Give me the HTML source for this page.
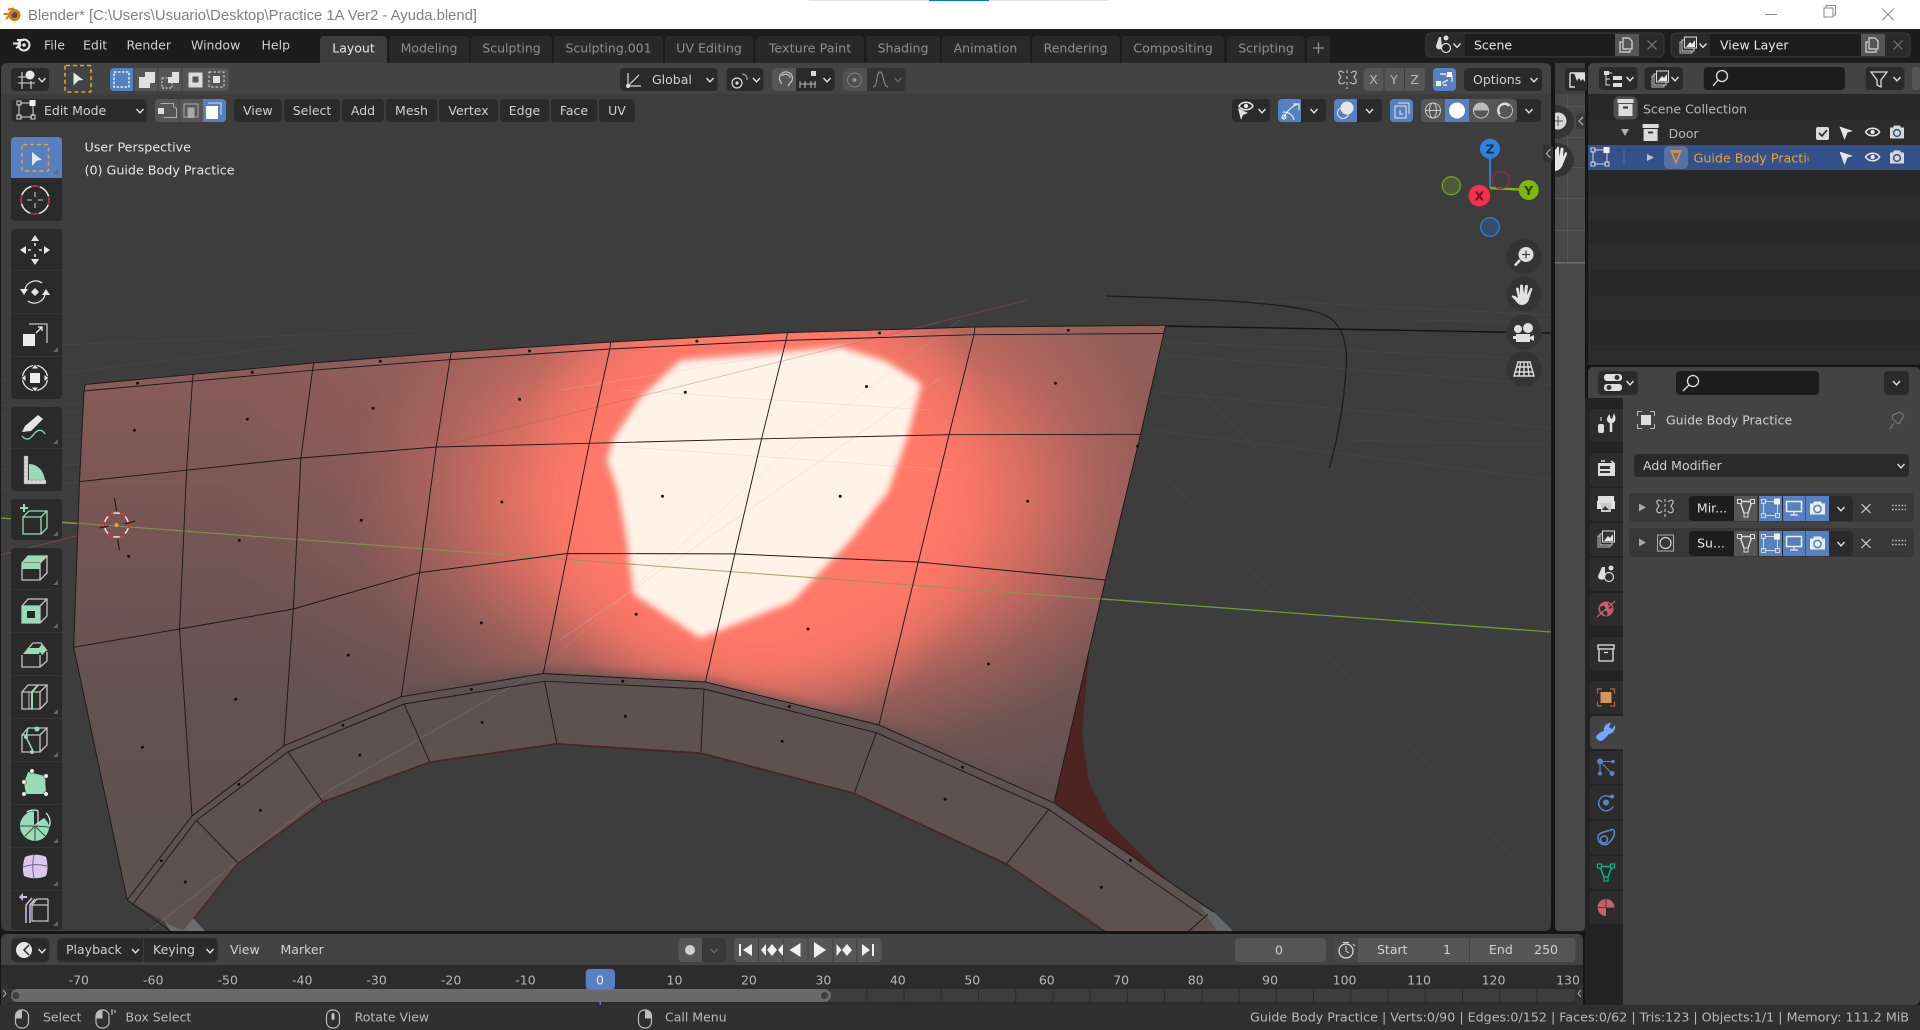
<!DOCTYPE html>
<html lang="en"><head><meta charset="utf-8"><title>Blender</title>
<style>
html,body{margin:0;padding:0;background:#161616;overflow:hidden}
svg{display:block;position:absolute;left:0;top:0}
text{font-family:"DejaVu Sans","Liberation Sans",sans-serif;font-size:12.5px;fill:#d0d0d0;white-space:pre}
.d{fill:#8f8f8f}.b{fill:#e6e6e6}.g{fill:#b8b8b8}
.m{text-anchor:middle}
.w{fill:#2a2a2a}.k{fill:#1d1d1d}.l{fill:#565656}.u{fill:#5680c2}
.s{fill:none;stroke:#dcdcdc;stroke-width:1.3}
.sg{fill:none;stroke:#c4c4c4;stroke-width:1.3}
.gr{fill:#97dcb6}
</style></head><body>
<svg width="1920" height="1030" viewBox="0 0 1920 1030" xmlns="http://www.w3.org/2000/svg">
<defs>
<path id="ch" d="M-3.5-2 0 1.8 3.5-2" fill="none" stroke="#e0e0e0" stroke-width="1.4"/>
<path id="chd" d="M-3.5-2 0 1.8 3.5-2" fill="none" stroke="#6a6a6a" stroke-width="1.3"/>
<path id="tr" d="M-3-4 4 0-3 4z" fill="#a8a8a8"/>
<path id="ar" d="M-5-6.500 5 1 0 1.500-5 6.500z" fill="#e6e6e6"/>
<path id="ar2" d="M-6.500-6.500 7-2 1.500-.5-1.500 7z" fill="#e6e6e6"/>
<g id="eye"><path d="M-7 0C-4-5 4-5 7 0 4 5-4 5-7 0z" fill="none" stroke="#e6e6e6" stroke-width="1.6"/><circle r="2.2" fill="#e6e6e6"/></g>
<g id="cam"><path d="M-7-5h3l1-2h6l1 2h3v11h-14z" fill="#d8d8d8"/><circle cy="0.5" r="3.4" fill="none" stroke="#34518a" stroke-width="1.5"/></g>
<g id="cam2"><path d="M-7.5-5h3l1-2h7l1 2h3v11h-15z" fill="#ececec"/><circle cy="0.5" r="3.6" fill="none" stroke="#5680c2" stroke-width="1.5"/></g>
<g id="box"><rect x="-8" y="-9" width="16" height="4" fill="#dcdcdc"/><path d="M-7-4h14V8H-7z" fill="#dcdcdc"/><rect x="-2.5" y="-1.5" width="5" height="2" fill="#333"/></g>
<g id="mode"><path d="M-6-7H5M-7-6V6M-6 7H6M7-5V6" stroke="#d8d8d8" stroke-width="1" fill="none"/><rect x="-9" y="-9" width="4" height="4" fill="none" stroke="#d8d8d8"/><rect x="-9" y="5" width="4" height="4" fill="none" stroke="#d8d8d8"/><rect x="5" y="5" width="4" height="4" fill="none" stroke="#d8d8d8"/><rect x="3.5" y="-10" width="6" height="6" fill="#f0f0f0"/></g>
<g id="mt"><path d="M-6-7H6L1.5 6h-3z" fill="none" stroke="#dcdcdc" stroke-width="1.4"/><rect x="-8.5" y="-9" width="4" height="4" fill="#555" stroke="#dcdcdc"/><rect x="4.5" y="-9" width="4" height="4" fill="#555" stroke="#dcdcdc"/><rect x="-2" y="4.5" width="4" height="4" fill="#555" stroke="#dcdcdc"/></g>
<g id="mon"><rect x="-7.5" y="-6.5" width="15" height="10" fill="none" stroke="#f0f0f0" stroke-width="1.5"/><path d="M0 4v2.5M-4 7h8" stroke="#f0f0f0" stroke-width="1.2"/></g>
<g id="xx"><path d="M-4.5-4.5 4.5 4.5M4.5-4.5-4.5 4.5" stroke="#d0d0d0" stroke-width="1.2"/></g>
<path id="dots" d="M-7-2h14M-7 2h14" stroke="#bbb" stroke-width="1.6" stroke-dasharray="1.6 1.6" fill="none"/>
<g id="wc"><path d="M-13-5h18v17h-18zM-13-5l6-7h19l-7 7M12-12V5l-7 7" fill="none" stroke="#c4c4c4" stroke-width="1.3"/></g>
<g id="copy"><path d="M-5-3h-2v10H3V5M-4-7H2l3 3v8H-4z" fill="none" stroke="#dcdcdc" stroke-width="1.2"/></g>
<g id="imgs"><rect x="-8" y="-3" width="12" height="11" fill="none" stroke="#bbb"/><rect x="-6" y="-5" width="12" height="11" fill="#333" stroke="#ccc"/><rect x="-3.5" y="-8" width="12" height="11" fill="#333" stroke="#e0e0e0"/><path d="M-2 2 2-3 4-1 7-5V2z" fill="#e6e6e6"/></g>
<clipPath id="vp"><rect x="1" y="94" width="1550" height="837"/></clipPath>
<clipPath id="st"><rect x="1555" y="94" width="30" height="170"/></clipPath>
<clipPath id="otx"><rect x="1690" y="146" width="118.500" height="23"/></clipPath>
<clipPath id="patch"><path d="M85 384.5 193.3 374.3 313.8 362.9 451.3 352.2 610.7 342 787.5 332.7 975 327 1165.6 325.3 1163.8 333.5 1140.6 434.3 1105.4 580 1054 803 879 725 705.4 682 543.3 673.5 401.3 696.7 284 745.7 192 816 127.2 900 73.7 647.3 79.5 481.6z"/></clipPath>
<linearGradient id="base" x1="0" y1="0" x2="0" y2="1"><stop offset="0" stop-color="#8f5e59"/><stop offset=".35" stop-color="#7a5755"/><stop offset=".7" stop-color="#675252"/><stop offset="1" stop-color="#5f5150"/></linearGradient>
<radialGradient id="glow" gradientUnits="userSpaceOnUse" cx="0" cy="0" r="1" gradientTransform="translate(765 500) scale(540 340)">
<stop offset="0" stop-color="#ff7868"/><stop offset=".34" stop-color="#ff7868"/><stop offset=".48" stop-color="#ff7868" stop-opacity=".72"/><stop offset=".62" stop-color="#ff7868" stop-opacity=".34"/><stop offset=".78" stop-color="#ff7868" stop-opacity=".08"/><stop offset="1" stop-color="#ff7868" stop-opacity="0"/>
</radialGradient>
<radialGradient id="glow2" gradientUnits="userSpaceOnUse" cx="0" cy="0" r="1" gradientTransform="translate(760 480) scale(240 260)">
<stop offset="0" stop-color="#ff7868"/><stop offset=".6" stop-color="#ff7868"/><stop offset=".8" stop-color="#ff7868" stop-opacity=".5"/><stop offset="1" stop-color="#ff7868" stop-opacity="0"/>
</radialGradient>
<filter id="b4" x="-10%" y="-10%" width="120%" height="120%"><feGaussianBlur stdDeviation="3.5"/></filter>
<filter id="b6" x="-10%" y="-30%" width="120%" height="160%"><feGaussianBlur stdDeviation="6"/></filter>
</defs>

<!-- page + titlebar -->
<rect width="1920" height="1030" fill="#161616"/>
<rect width="1920" height="29" fill="#fff"/>
<rect x="809" y="0" width="300" height="1" fill="#e4e4e4"/><rect x="929" y="0" width="60" height="1" fill="#0078d7"/>
<g transform="translate(12,15)"><circle cx="2.500" cy="0" r="6" fill="#ea7600"/><circle cx="2.500" cy="0" r="3" fill="#265787"/><path d="M-8.500-1H-1L-6 4M-4-5.500 2-6.500" stroke="#ea7600" stroke-width="2" fill="none"/></g>
<text x="28" y="20" style="font-family:'Liberation Sans',sans-serif;font-size:14.4px;fill:#808080" textLength="449" lengthAdjust="spacingAndGlyphs">Blender* [C:\Users\Usuario\Desktop\Practice 1A Ver2 - Ayuda.blend]</text>
<path d="M1765 14.5h12M1824 17h9v-9h-9zM1826 8V5.5h9.5V15h-2.5M1882 8.5l12 12M1894 8.5l-12 12" stroke="#8a8a8a" fill="none"/>

<!-- top bar -->
<rect y="29" width="1920" height="34" fill="#1c1c1c"/>
<g transform="translate(22,45)"><circle cx="2" r="5.5" fill="none" stroke="#e6e6e6" stroke-width="2"/><circle cx="2" r="1.8" fill="#e6e6e6"/><path d="M-9-1.5H-1M-6 3-1 0M-5-5H2" stroke="#e6e6e6" stroke-width="2" fill="none"/></g>
<text x="44" y="49.5">File</text><text x="83" y="49.5">Edit</text><text x="126.5" y="49.5">Render</text><text x="191" y="49.5">Window</text><text x="261.5" y="49.5">Help</text>
<g fill="#292929">
<rect x="320" y="36" width="67" height="40" rx="4" fill="#3d3d3d"/>
<rect x="389" y="36" width="80" height="40" rx="4"/><rect x="471" y="36" width="81" height="40" rx="4"/><rect x="554" y="36" width="109" height="40" rx="4"/><rect x="665" y="36" width="88" height="40" rx="4"/><rect x="756" y="36" width="108" height="40" rx="4"/><rect x="866.5" y="36" width="73.5" height="40" rx="4"/><rect x="942" y="36" width="88" height="40" rx="4"/><rect x="1032" y="36" width="88" height="40" rx="4"/><rect x="1122" y="36" width="102" height="40" rx="4"/><rect x="1227" y="36" width="77.5" height="40" rx="4"/><rect x="1307" y="36" width="23" height="40" rx="4"/>
</g>
<text class="m b" x="353.5" y="52.500">Layout</text>
<text class="m d" x="429" y="52.500">Modeling</text><text class="m d" x="511.5" y="52.500">Sculpting</text><text class="m d" x="608.5" y="52.500">Sculpting.001</text><text class="m d" x="709" y="52.500" style="font-size:12.600px">UV Editing</text><text class="m d" x="810" y="52.500" style="font-size:12.800px">Texture Paint</text><text class="m d" x="903" y="52.500">Shading</text><text class="m d" x="985.500" y="52.500">Animation</text><text class="m d" x="1075.500" y="52.500">Rendering</text><text class="m d" x="1173" y="52.500" style="font-size:12.700px">Compositing</text><text class="m d" x="1266" y="52.500">Scripting</text>
<path d="M1318.500 42.500v11M1313 48h11" stroke="#8f8f8f" stroke-width="1.3"/>
<!-- scene/viewlayer -->
<rect x="1426" y="33" width="238" height="24" rx="5" fill="#2a2a2a" stroke="#3a3a3a"/>
<rect x="1465" y="34" width="170" height="22" fill="#1d1d1d"/><rect x="1615" y="34" width="24" height="22" fill="#555"/>
<g transform="translate(1444,45)"><path d="M-5-8-8 1c0 4 5 4 6 2L-3-8z" fill="#dcdcdc"/><circle cx="2" cy="-7" r="2.5" fill="#dcdcdc"/><circle cx="2" cy="3" r="4.5" fill="#222" stroke="#dcdcdc" stroke-width="1.2"/></g>
<use href="#ch" x="1457" y="45.5"/>
<text x="1474" y="49.5" class="b">Scene</text>
<use href="#copy" x="1627" y="45"/><use href="#xx" x="1652" y="45" opacity=".45"/>
<rect x="1671" y="33" width="239" height="24" rx="5" fill="#2a2a2a" stroke="#3a3a3a"/>
<rect x="1710" y="34" width="171" height="22" fill="#1d1d1d"/><rect x="1861" y="34" width="24" height="22" fill="#555"/>
<use href="#imgs" x="1688" y="45"/><use href="#ch" x="1703" y="45.5"/>
<text x="1720" y="49.5" class="b">View Layer</text>
<use href="#copy" x="1873" y="45"/><use href="#xx" x="1898" y="45" opacity=".45"/>

<!-- viewport -->
<rect x="1" y="63" width="1550" height="868" rx="6" fill="#3d3d3d"/>
<g clip-path="url(#vp)">
<path d="M1 405 700 392M1 415 560 392M1 440 300 425M1 470 160 458M1 490 100 480M60 345 420 330M1 380 300 345M1168 342 1551 360M1165 355 1551 385M1155 392 1551 428M1150 430 1551 480M1150 345 1551 730M1160 470 1551 900M1345 440 1551 445M1250 300 1551 315M1405 320 1551 322" stroke="#444" fill="none"/>
<path d="M0 555 1028 300" stroke="#6b4046" stroke-width="1.2" opacity=".8"/>
<path d="M0 518 1551 632" stroke="#6f9a2c" stroke-width="1.300"/>
<path d="M1163 326 1551 333" stroke="#141414" stroke-width="1.4"/>
<path d="M1106 296C1200 299 1290 302 1322 314 1345 322 1348 350 1346 370 1344 400 1338 440 1329 468" fill="none" stroke="#1c1c1c" stroke-width="1.3"/>
<path d="M1089.7 647 1082 732.7 1088.8 781.6 1108.9 822.4 1158 871.4 1205 912 1054 803z" fill="#4e2422"/>
<path d="M183 932 237.5 863.400 322.3 802.200 429.5 762.200 556.7 743.900 700.9 753.200 854.5 793.600 1007 864.300 1105.8 932" fill="none" stroke="#4a2725" stroke-width="1.800"/>
<path d="M170 931 205 931 190 915 140 880z" fill="#6a6e6e"/>
<path d="M85 384.5 193.3 374.3 313.8 362.9 451.3 352.2 610.7 342 787.5 332.7 975 327 1165.6 325.3 1163.8 333.5 1140.6 434.3 1105.4 580 1054 803 1213.8 912 1233 931 1105.8 931 1007 863.3 854.5 792.6 700.9 752.2 556.7 742.9 429.5 761.2 322.3 801.2 237.5 862.4 183 931 170 925 127.2 900 73.7 647.3 79.5 481.6z" fill="#5e5251"/>
<path d="M1200 905 1213.8 912 1233 931 1217 931z" fill="#636868"/>
<path d="M78 600 74 647.300 92 720 82 640z" fill="#686c6c"/>
<g clip-path="url(#patch)">
<rect x="60" y="320" width="1120" height="490" fill="url(#base)"/>
<rect x="60" y="320" width="1120" height="490" fill="url(#glow)"/>
<rect x="60" y="200" width="1120" height="610" fill="url(#glow2)"/>
<path d="M401.3 696.7 543.3 676 705.4 686 879 730 1054 808" fill="none" stroke="#5f5150" stroke-width="12" filter="url(#b6)" opacity=".9"/>
</g>
<path d="M680 360.4 841 347 885.7 361 921.4 383.7 908 434.7 888 492 850 540.8 792 602 700.4 638 633.5 594 626.8 540.8 617.9 491.8 606.7 459 613.4 438.8 640 398z" fill="#fff3e8" filter="url(#b4)"/>
<path d="M560 390 900 335M560 640 940 378M600 445 950 470M620 390 930 410" stroke="#d9c2ba" stroke-width=".8" opacity=".35" fill="none"/>
<path d="M62 522 1100 599" stroke="#8a9a50" stroke-width="1.100" opacity=".8"/>
<path d="M0 555 940 322" stroke="#a05058" stroke-width="1" opacity=".3"/>
<path d="M150 930 330 790 540 670 800 440 960 320" stroke="#c0c0c0" stroke-width=".8" opacity=".2" fill="none"/>
<g fill="none" stroke="#1f1819" stroke-width=".95">
<path d="M85 384.5 193.3 374.3 313.8 362.9 451.3 352.2 610.7 342 787.5 332.7 975 327 1165.6 325.3"/>
<path d="M84 391 192.4 381.2 312.5 370.2 450 359.6 609.8 349 786 340.4 974 334.7 1163.8 333.5"/>
<path d="M79.5 481.6 186.6 470.2 300.9 458 436.2 447 589.3 443.3 761.6 438.8 949 434.7 1140.6 434.3"/>
<path d="M73.7 647.3 179.5 629 293.3 609 419.6 572.7 567.4 553.5 734.8 553.9 918.3 562 1105.4 580"/>
<path d="M127.2 900 192 816 284 745.7 401.3 696.7 543.3 673.5 705.4 682 879 725 1054 802.9 1213.8 912.2"/>
<path d="M133 904 196.4 820.4 288 751.8 404 704 544.6 681.2 704 689 876.3 732.7 1048.7 809.4 1202.7 916"/>
<path d="M85 384.5 84 391 79.5 481.6 73.7 647.3 127.2 900 183 940"/>
<path d="M193.3 374.3 192.4 381.2 186.6 470.2 179.5 629 192 816"/>
<path d="M313.8 362.9 312.5 370.2 300.9 458 293.3 609 284 745.7"/>
<path d="M451.3 352.2 450 359.6 436.2 447 419.6 572.7 401.3 696.7"/>
<path d="M610.7 342 609.8 349 589.3 443.3 567.4 553.5 543.3 673.5"/>
<path d="M787.5 332.7 786 340.4 761.6 438.8 734.8 553.9 705.4 682"/>
<path d="M975 327 974 334.7 949 434.7 918.3 562 879 725"/>
<path d="M1165.6 325.3 1163.8 333.5 1140.6 434.3 1105.4 580 1054 803"/>
<path d="M196.4 820.4 237.5 862.4M288 751.8 322.3 801.2M404 704 429.5 761.2M544.6 681.2 556.7 742.9M704 689 700.9 752.2M876.3 732.7 854.5 792.6M1048.7 809.4 1007 863.3M1208 914 1189 931"/>
</g>
<path d="M137.5 383.3h0M252.2 372.2h0M380.4 361.2h0M529.5 351h0M696.9 341.2h0M134.4 430.2h0M247.3 419.2h0M373.2 408.2h0M519.6 399.2h0M685.3 392.2h0M128.6 556.3h0M239.3 540.4h0M361.2 520.4h0M501.8 502h0M662.5 496.3h0M142.4 747.3h0M235.7 699.2h0M348.2 655.1h0M481.3 622.9h0M636.2 614.3h0M161.2 860.8h0M238.8 784.5h0M342.9 725.3h0M471.4 689.4h0M622.8 681.2h0M185.3 882h0M260.3 810.2h0M359.8 755.1h0M482.1 722.4h0M625.4 716.3h0M879.5 333h0M1068.3 330.2h0M866.5 386.5h0M1055.4 383.3h0M840.2 496.3h0M1027.7 501.2h0M1137.5 446.1h0M808 629h0M988.4 664h0M789.3 706.5h0M962.5 767.3h0M1130.4 860.4h0M782.1 741.2h0M945.1 799.2h0M1101.3 887.3h0" stroke="#111" stroke-width="3" stroke-linecap="round" fill="none"/>
<!-- 3D cursor -->
<g transform="translate(116.500,525)"><circle r="12" fill="none" stroke="#e8e8e8" stroke-width="1.4"/><circle r="12" fill="none" stroke="#e02020" stroke-width="1.5" stroke-dasharray="6 6.5" stroke-dashoffset="3"/><path d="M-2-27 0-14M1 14 3 25M-17 3-8 1M8-1 19-4" stroke="#1b1516"/><circle r="2" fill="#f0a030"/></g>
</g>
<!-- viewport header -->
<path d="M1 94V69a6 6 0 0 1 6-6h1538a6 6 0 0 1 6 6v25z" fill="#434343"/>
<rect x="11" y="68" width="38" height="23" rx="4" class="w"/>
<g transform="translate(28,80)"><path d="M-10 3H7M-10-3H2M-6-8V9M3 1V9" stroke="#dcdcdc" stroke-width="1.1" fill="none"/><circle cx="2" cy="-5" r="4.5" fill="#e6e6e6"/></g><use href="#ch" x="42" y="80"/>
<rect x="65" y="65.500" width="26" height="26.500" rx="1" fill="none" stroke="#e8a32e" stroke-width="1.600" stroke-dasharray="4 3"/>
<use href="#ar" x="78.500" y="79"/>
<rect x="110" y="68" width="119" height="23" rx="4" class="l"/><path d="M114 68h19v23h-19a4 4 0 0 1-4-4V72a4 4 0 0 1 4-4z" class="u"/>
<path d="M134 68v23M158 68v23M182 68v23" stroke="#3d3d3d"/>
<rect x="114" y="72" width="15" height="15" fill="none" stroke="#fff" stroke-width="1.3" stroke-dasharray="2.500 1.500"/>
<path d="M145 72h10v11h-5v5h-11v-11h6z" fill="#e0e0e0"/>
<path d="M172 72h7v11h-11v-6h4z" fill="#e0e0e0"/><rect x="162" y="78" width="10" height="10" fill="none" stroke="#ddd" stroke-dasharray="2 1.500"/>
<path d="M189 72h14v15h-14zM193 76v6h6v-6z" fill="#dcdcdc" fill-rule="evenodd" transform="translate(-.5,.5)"/>
<rect x="209" y="72" width="15" height="15" fill="none" stroke="#ddd" stroke-dasharray="2.500 2"/><rect x="213" y="76" width="7" height="7" fill="#e0e0e0"/>
<!-- orientation -->
<rect x="620" y="68" width="97.500" height="23" rx="4" class="w"/>
<path d="M628 73V86H641M629 85 639 75" stroke="#dcdcdc" stroke-width="1.2" fill="none"/><circle cx="628" cy="86" r="2" fill="#dcdcdc"/>
<text x="652" y="84">Global</text><use href="#ch" x="710" y="80"/>
<rect x="726.500" y="68" width="37" height="23" rx="4" class="w"/>
<circle cx="737" cy="83" r="5" fill="none" stroke="#dcdcdc" stroke-width="1.2"/><circle cx="737" cy="83" r="1.6" fill="#dcdcdc"/><path d="M742 74a5 5 0 0 1 5 6" fill="none" stroke="#bbb"/><use href="#ch" x="756.500" y="80"/>
<rect x="772" y="68" width="62.500" height="23" rx="4" class="w"/><path d="M776 68h20v23h-20a4 4 0 0 1-4-4V72a4 4 0 0 1 4-4z" class="l"/>
<path d="M782 84c-6-7 0-13 5-12 6 1 7 8 3 11l-2 3M782 76c2-3 8-2 8 2" fill="none" stroke="#bfbfbf" stroke-width="1.3"/>
<path d="M800 84h16M800 81v7M805 81v7M811 81v7M815 81v7" stroke="#bbb" fill="none"/><rect x="811" y="71" width="5" height="5" fill="#d8d8d8"/><use href="#ch" x="827" y="80"/>
<rect x="843" y="68" width="62.500" height="23" rx="4" fill="#333"/><path d="M847 68h20v23h-20a4 4 0 0 1-4-4V72a4 4 0 0 1 4-4z" fill="#505050"/>
<circle cx="854.500" cy="80" r="7" fill="none" stroke="#808080"/><circle cx="854.500" cy="80" r="2" fill="#909090"/><path d="M873 87c5 0 3-15 7-15s3 15 8 15" fill="none" stroke="#808080" stroke-width="1.2"/><use href="#chd" x="898" y="80"/>
<g transform="translate(1349,79)"><path d="M-2-9v3M-2-3v3M-2 3v3M-2 8v2M-5-6c-3-3-6-2-5 1l2 3-2 3c-1 4 3 5 6 2M2-6c3-3 6-2 5 1L5-2l2 3c1 4-3 5-6 2" fill="none" stroke="#bbb" stroke-width="1.2"/></g>
<rect x="1363.700" y="68" width="61.300" height="23" rx="4" class="l"/><path d="M1384 68v23M1404.500 68v23" stroke="#3d3d3d"/>
<text x="1373.500" y="84" class="m g">X</text><text x="1394" y="84" class="m g">Y</text><text x="1414.500" y="84" class="m g">Z</text>
<rect x="1433" y="68" width="23" height="23" rx="4" class="u"/><path d="M1438 86l3-3M1446 76h6v6M1440 74h6M1447 85h-4M1448 80l-6 3" stroke="#e6e6e6" stroke-width="1.4" fill="none"/><rect x="1436" y="81" width="5" height="5" fill="#fff"/><rect x="1447" y="72" width="5" height="5" fill="#fff"/>
<rect x="1464" y="68" width="78" height="23" rx="4" class="w"/><text x="1473" y="84">Options</text><use href="#ch" x="1534" y="80"/>
<!-- row 2 -->
<rect x="11.400" y="99" width="135.600" height="23" rx="4" class="w" stroke="#383838"/>
<use href="#mode" x="26" y="110"/><text x="44" y="115">Edit Mode</text><use href="#ch" x="140" y="111"/>
<rect x="155" y="99" width="71" height="23" rx="4" class="l"/><path d="M203 99h19a4 4 0 0 1 4 4v15a4 4 0 0 1-4 4h-19z" class="u"/><path d="M179 99v23" stroke="#3d3d3d"/>
<path d="M160 104h13v3l3 2v9h-13" fill="none" stroke="#aaa" transform="translate(.5,-.5)"/><rect x="158" y="108" width="6" height="6" fill="#ddd"/>
<path d="M184 104h14v13h-4V108h-6v9h-4z" fill="none" stroke="#aaa"/><rect x="188" y="108" width="6" height="10" fill="#aaa"/>
<path d="M208 103h13v12" fill="none" stroke="#ddd"/><rect x="206" y="106" width="12" height="13" fill="#fff"/>
<g class="w">
<rect x="234" y="99" width="47.600" height="23" rx="4"/><rect x="284" y="99" width="56" height="23" rx="4"/><rect x="342" y="99" width="42" height="23" rx="4"/><rect x="386" y="99" width="51" height="23" rx="4"/><rect x="439" y="99" width="59" height="23" rx="4"/><rect x="500" y="99" width="49" height="23" rx="4"/><rect x="551" y="99" width="46" height="23" rx="4"/><rect x="599" y="99" width="35.700" height="23" rx="4"/>
</g>
<text class="m" x="257.800" y="115">View</text><text class="m" x="312" y="115">Select</text><text class="m" x="363" y="115">Add</text><text class="m" x="411.500" y="115">Mesh</text><text class="m" x="468.500" y="115">Vertex</text><text class="m" x="524.500" y="115">Edge</text><text class="m" x="574" y="115">Face</text><text class="m" x="617" y="115">UV</text>
<rect x="1232" y="99" width="38" height="23" rx="4" class="w"/><use href="#eye" x="1246" y="106"/><path d="M1238 108 1248 113 1243 115 1241 120z" fill="#e0e0e0"/><use href="#ch" x="1262" y="111"/>
<rect x="1278" y="99" width="48" height="23" rx="4" class="w"/><path d="M1282 99h19v23h-19a4 4 0 0 1-4-4v-15a4 4 0 0 1 4-4z" class="u"/><path d="M1283 119c3-7 9-13 15-15M1293 104h6v6M1283 112c6 0 10 3 11 8" stroke="#e6e6e6" fill="none" stroke-width="1.2"/><circle cx="1284" cy="117" r="2" fill="none" stroke="#fff"/><use href="#ch" x="1314" y="111"/>
<rect x="1334" y="99" width="48" height="23" rx="4" class="w"/><path d="M1338 99h19v23h-19a4 4 0 0 1-4-4v-15a4 4 0 0 1 4-4z" class="u"/><circle cx="1347" cy="108" r="6.500" fill="#e6e6e6"/><circle cx="1343" cy="113" r="5.500" fill="none" stroke="#e6e6e6"/><use href="#ch" x="1369.500" y="111"/>
<rect x="1390" y="99" width="23" height="23" rx="4" class="u"/><path d="M1398 103h11v11M1395 106h11v12h-11z" fill="none" stroke="#e6e6e6"/><path d="M1400 110v4h3" stroke="#e6e6e6" fill="none"/>
<rect x="1421" y="99" width="120" height="23" rx="4" class="w"/><rect x="1421" y="99" width="96" height="23" rx="4" class="l"/><rect x="1445" y="99" width="24" height="23" class="u"/>
<g fill="none" stroke="#ccc"><circle cx="1433" cy="110.500" r="7.500"/><ellipse cx="1433" cy="110.500" rx="3.500" ry="7.500"/><path d="M1425.500 110.500h15"/><circle cx="1481" cy="110.500" r="7.500"/><circle cx="1505" cy="110.500" r="7.500"/></g>
<circle cx="1457" cy="110.500" r="8" fill="#fff"/><path d="M1481 103a7.500 7.500 0 0 1 0 15z" fill="#bbb" transform="rotate(-90 1481 110.500)"/><path d="M1500 114a6 6 0 0 1 9-8" fill="none" stroke="#ddd" stroke-width="2"/><use href="#ch" x="1529" y="111"/>
<text x="84.500" y="151.500" class="b" style="font-size:12.700px">User Perspective</text>
<text x="84.500" y="174.500" class="b" style="font-size:12.700px">(0) Guide Body Practice</text>
<!-- gizmo -->
<path d="M1490 158V188" stroke="#2e7fd6" stroke-width="2"/><path d="M1490 188 1520 189.500" stroke="#7cb30c" stroke-width="2.500"/>
<circle cx="1451.300" cy="185.700" r="9" fill="#4d5a3a" stroke="#74a320" stroke-width="1.300"/>
<circle cx="1490" cy="227" r="9.300" fill="#374c6a" stroke="#2e7fd6" stroke-width="1.300"/>
<circle cx="1500.700" cy="180" r="8.500" fill="none" stroke="#8a3040" stroke-width="1.300"/>
<circle cx="1490" cy="148.700" r="10" fill="#2e83e0"/><text class="m" x="1490" y="153.500" style="fill:#12305a;font-weight:bold">Z</text>
<circle cx="1528.700" cy="190" r="10" fill="#7cb80c"/><text class="m" x="1528.700" y="195" style="fill:#2d4204;font-weight:bold">Y</text>
<circle cx="1479.300" cy="195.700" r="10.800" fill="#f5304f"/><text class="m" x="1479.300" y="200.500" style="fill:#661422;font-weight:bold">X</text>
<rect x="1543" y="145" width="10" height="17" rx="3" fill="#333"/><path d="M1550.500 149l-4 4.500 4 4.500" stroke="#aaa" stroke-width="1.300" fill="none"/>
<g fill="#343434"><circle cx="1524" cy="256.700" r="17.500"/><circle cx="1524" cy="294" r="17.500"/><circle cx="1524" cy="332" r="17.500"/><circle cx="1524" cy="369" r="17.500"/></g>
<circle cx="1526" cy="254.500" r="7.500" fill="#e0e0e0"/><path d="M1520 260 1515 265.500" stroke="#e0e0e0" stroke-width="2.500"/><path d="M1526 250.500v8M1522 254.500h8" stroke="#444" stroke-width="1.300"/>
<path d="M1515 296l3 2-2-9c0-2 2-2 3 0l1 6 0-9c0-2 3-2 3 0l1 8 1-8c1-2 3-1 3 0l-1 9 3-6c1-2 3-1 2 1l-3 9c-1 4-4 6-7 6-3 0-5-2-7-5l-3-3c-1-2 1-2 2-1z" fill="#e0e0e0"/>
<circle cx="1518" cy="329" r="4" fill="#e0e0e0"/><circle cx="1528" cy="328" r="5" fill="#e0e0e0"/><rect x="1516" y="334" width="14" height="8" fill="#e0e0e0"/><path d="M1530 337l4-2v6l-4-2z" fill="#e0e0e0"/><rect x="1513" y="336" width="3" height="3" fill="#e0e0e0"/>
<path d="M1518 362h12l4 14h-20zM1520.500 362l-1.500 14M1527.500 362l1.500 14M1524 362v14M1516.500 367h15M1515 372h18" fill="none" stroke="#dcdcdc" stroke-width="1.400"/>
<!-- tools -->
<g class="w">
<path d="M11 178h51v39a4 4 0 0 1-4 4H15a4 4 0 0 1-4-4z"/><rect x="11" y="229" width="51" height="170" rx="4"/><rect x="11" y="407" width="51" height="84" rx="4"/><rect x="11" y="499" width="51" height="41" rx="4"/><rect x="11" y="548" width="51" height="382" rx="4"/>
</g>
<path d="M15 137h43a4 4 0 0 1 4 4v37H11v-37a4 4 0 0 1 4-4z" class="u"/>
<path d="M11 270.500h51M11 313.500h51M11 356.500h51M11 448.500h51M11 589.500h51M11 632.500h51M11 675.500h51M11 718.500h51M11 761.500h51M11 804.500h51M11 847.500h51M11 890.500h51" stroke="#343434"/>
<path d="M58 174v-5l-5 5zM58 352v-5l-5 5zM58 444v-5l-5 5zM58 536v-5l-5 5zM58 585v-5l-5 5zM58 628v-5l-5 5zM58 714v-5l-5 5zM58 757v-5l-5 5zM58 843v-5l-5 5zM58 886v-5l-5 5zM58 926v-5l-5 5z" fill="#666"/>
<rect x="22" y="144.500" width="26.500" height="26.500" rx="1" fill="none" stroke="#e8a32e" stroke-width="1.600" stroke-dasharray="4 3"/><path d="M32 152 42 160 37 160.500 32 166z" fill="#e6e6e6"/>
<g transform="translate(35,200)"><circle r="14" fill="none" stroke="#eee" stroke-width="1.500"/><circle r="14" fill="none" stroke="#9c2f3a" stroke-width="1.600" stroke-dasharray="9 13" stroke-dashoffset="4"/><path d="M-8 0h5M3 0h5M0-8v5M0 3v5" stroke="#aaa" stroke-width="1.300"/></g>
<g transform="translate(35,250)" fill="#e6e6e6"><path d="M0-15 4-9H-4zM0 15 4 9H-4zM-15 0-9-4V4zM15 0 9-4V4z"/><path d="M-7 0h3M4 0h3M0-7v3M0 4v3" stroke="#e6e6e6" stroke-width="1.500"/></g>
<g transform="translate(35,292)"><path d="M-10-3A11 11 0 0 1 7-9M10 3A11 11 0 0 1-7 9" fill="none" stroke="#e6e6e6" stroke-width="1.300"/><path d="M-11 3-15-3H-7zM11-3 15 3H7zM0-4 4 0 0 4-4 0z" fill="#e6e6e6"/></g>
<g transform="translate(35,335)"><path d="M-8-11H10V8" fill="none" stroke="#c0c0c0" stroke-width="1.300" transform="translate(2,0)"/><rect x="-12" y="-1" width="12" height="12" fill="#ececec"/><path d="M1-2 7-8M3-8H7V-4" stroke="#ececec" stroke-width="1.300" fill="none"/></g>
<g transform="translate(35,378)"><circle r="12.500" fill="none" stroke="#e6e6e6" stroke-width="1.300"/><rect x="-5" y="-5" width="10" height="10" fill="#ececec"/><path d="M0-14 4-9H-4zM0 14 4 9H-4zM-14 0-9-4V4zM14 0 9-4V4z" fill="#e6e6e6" stroke="#2a2a2a"/></g>
<g transform="translate(35,428)"><path d="M-13 4-10-2 3-13 8-9-4 3z" fill="#e6e6e6"/><path d="M-13 8c5 6 9 2 12-2 4-5 8-5 11 0" fill="none" stroke="#97dcb6" stroke-width="1.300"/></g>
<g transform="translate(35,470)"><path d="M-6 12V-6C3-6 10 2 10 12z" fill="#97dcb6"/><path d="M-11-14h4V10h18v4H-11zM-11-10h3M-11-6h3M-11-2h3M-11 2h3M-11 6h3M-7 10v2M-3 10v2M1 10v2M5 10v2" fill="#d8d8d8" stroke="#888" stroke-width=".4"/></g>
<g transform="translate(35,520)"><path d="M-12-3h18v17h-18zM-12-3l6-6H12L6-3M12-9V8L6 14" fill="none" stroke="#97dcb6" stroke-width="1.300"/><path d="M-15-12h8M-11-16v8" stroke="#97dcb6" stroke-width="2"/></g>
<g transform="translate(35,568)"><use href="#wc"/><path d="M-13-6v7H5v-7zM-13-5l6-7H12L5-5z" fill="#97dcb6"/></g>
<g transform="translate(35,611)"><use href="#wc"/><path d="M-13-5H5V12H-13zM-8 0V7H0V0z" fill="#97dcb6" fill-rule="evenodd"/></g>
<g transform="translate(35,655)"><path d="M-13 0V12H5V0M5 12 12 6V-3M-8-5-2-12H6L12-4" fill="none" stroke="#c4c4c4" stroke-width="1.300"/><path d="M-12-1-7-7H6L4-1zM7-11 12-5 7 0 3-6z" fill="#97dcb6"/></g>
<g transform="translate(35,697)"><use href="#wc"/><path d="M-3-5V12M3-12-3-5" stroke="#97dcb6" stroke-width="2" fill="none"/><path d="M-6 12V-5" stroke="#c4c4c4"/></g>
<g transform="translate(35,740)"><use href="#wc"/><path d="M-7-12-9-3-2 11M-7-12" fill="none" stroke="#97dcb6" stroke-width="1.500"/><circle cx="-9" cy="-3" r="2" fill="#97dcb6"/><circle cx="-3" cy="12" r="2" fill="#97dcb6"/><circle cx="2" cy="-11" r="2.500" fill="#97dcb6"/></g>
<g transform="translate(35,783)"><path d="M-7-11-11 0-9 11H11L10-7z" fill="#97dcb6"/><g fill="#e6e6e6" stroke="#2a2a2a" stroke-width=".5"><circle cx="-3" cy="-12" r="2.300"/><circle cx="11" cy="-7" r="2.300"/><circle cx="-11" cy="-1" r="2.300"/><circle cx="-11" cy="11" r="2.300"/><circle cx="11" cy="11" r="2.300"/></g></g>
<g transform="translate(35,826)"><path d="M-1-1-1-15C-8-15-15-8-15 0-15 8-8 15 0 15 8 15 14 8 14 1 14-3 11-6 9-8z" fill="#97dcb6"/><path d="M-1 0-15 0M0 0 0 15M0 0-10 10M0 0 10 10M0 0 14 1M-10-15H3V-2M12-13c4 4 5 9 2 14" fill="none" stroke="#3a4a42" stroke-width="1"/><path d="M-8-14C-3-17 2-16 3-15V-2M11-13c4 4 5 10 3 14" fill="none" stroke="#e6e6e6" stroke-width="1.200"/></g>
<g transform="translate(35,867)"><path d="M-10-10C-4-13 6-13 11-10 13-4 13 4 11 9 4 12-4 12-11 9-13 3-12-5-10-10z" fill="#dcc7ec"/><path d="M-12 0C-4-3 4-3 12-1M-1-12C-3-3-2 6-1 11" fill="none" stroke="#70608a" stroke-width="1"/></g>
<g transform="translate(35,909)"><path d="M-3-4H13V12H-3zM-3-4 2-10H13M13-10V-4" fill="none" stroke="#c4c4c4" stroke-width="1.300"/><path d="M-9 14V-4L-3-11M-5 14V-4L0-10" fill="none" stroke="#d0bce6" stroke-width="1.500"/><path d="M-16-12-12-16V-13H-8V-11H-12V-8z" fill="#d0bce6"/></g>

<!-- strip -->
<rect x="1555" y="63" width="30" height="868" rx="4" fill="#484848"/>
<path d="M1555 63h30v31h-30z" fill="#3e3e3e"/>
<path d="M1555 106.500h30M1555 137.500h30M1555 167.500h30M1555 198.500h30M1555 230.500h30M1567.500 94v169" stroke="#565656"/>
<rect x="1555" y="262" width="30" height="1.500" fill="#6c6c6c"/>
<rect x="1565" y="68" width="22" height="23" rx="3" fill="#2a2a2a"/><path d="M1570 73h15M1570 73V87h5" stroke="#ddd" stroke-width="1.400" fill="none"/><path d="M1574 73h11v9l-2-3-2 2-2-3-2 3z" fill="#ddd"/>
<g clip-path="url(#st)"><circle cx="1557" cy="122" r="17" fill="#343434"/><circle cx="1557" cy="160" r="17" fill="#343434"/>
<circle cx="1558" cy="121" r="8.500" fill="#d8d8d8"/><path d="M1558 116v10M1553 121h10" stroke="#666" stroke-width="1.200"/>
<path d="M1555 150v21c3 0 7-3 8-7l4-10c.5-2-1.500-2.500-2-1l-2 4 .5-8c0-2-2.500-2-3 0l-1 8-.5-9c0-2-2-2-2 0z" fill="#e6e6e6"/></g>
<rect x="1576" y="113" width="9" height="16" rx="3" fill="#3a3a3a"/><path d="M1583 117l-4 4 4 4" stroke="#aaa" stroke-width="1.300" fill="none"/>

<!-- outliner -->
<rect x="1588" y="63" width="332" height="302" rx="5" fill="#282828"/>
<path d="M1588 94V68a5 5 0 0 1 5-5h327v31z" fill="#434343"/>
<rect x="1599" y="67" width="38.500" height="23" rx="4" class="w"/>
<path d="M1606 73h6M1606 73V85h4M1606 79h4" stroke="#ddd" fill="none"/><rect x="1604" y="71" width="5" height="4" fill="#ddd"/><rect x="1613" y="76" width="9" height="4" fill="#ddd"/><rect x="1613" y="83" width="9" height="4" fill="#ddd"/><use href="#ch" x="1630" y="79"/>
<rect x="1644.500" y="67" width="38.500" height="23" rx="4" class="w"/><use href="#imgs" x="1660" y="79"/><use href="#ch" x="1675" y="79"/>
<rect x="1703.700" y="67" width="141.300" height="23" rx="4" class="k"/><circle cx="1722" cy="76" r="5.500" fill="none" stroke="#e0e0e0" stroke-width="1.300"/><path d="M1718 80l-5 6" stroke="#e0e0e0" stroke-width="1.300"/>
<rect x="1865.700" y="67" width="38.800" height="23" rx="4" class="w"/><path d="M1871 72h16l-6 8v7l-4-2v-5z" fill="none" stroke="#dcdcdc" stroke-width="1.300"/><use href="#ch" x="1897" y="79"/>
<rect x="1912" y="67" width="8" height="23" rx="3" class="l"/>
<rect x="1588" y="120" width="332" height="25" fill="#2c2c2c"/>
<rect x="1588" y="195" width="332" height="25" fill="#2c2c2c"/><rect x="1588" y="245" width="332" height="25" fill="#2c2c2c"/><rect x="1588" y="295" width="332" height="25" fill="#2c2c2c"/><rect x="1588" y="345" width="332" height="20" fill="#2c2c2c"/>
<rect x="1613.500" y="96.500" width="24" height="23" rx="5" fill="#505050"/><use href="#box" x="1625.500" y="108"/>
<text x="1643" y="113.500" class="g">Scene Collection</text>
<path d="M1621 129h8l-4 7z" fill="#b0b0b0"/><use href="#box" x="1650.600" y="133"/>
<text x="1668.600" y="138" class="g">Door</text>
<rect x="1816" y="127" width="13" height="13" rx="2" fill="#dcdcdc"/><path d="M1819 133l3 3 5-6" stroke="#222" stroke-width="1.600" fill="none"/>
<use href="#ar2" x="1846" y="133"/><use href="#eye" x="1872.600" y="132"/><use href="#cam" x="1897" y="132.500"/>
<rect x="1588" y="145" width="332" height="25" fill="#34518a"/>
<use href="#mode" x="1600" y="157"/>
<path d="M1624 150v15" stroke="#5a70a0"/>
<path d="M1647 154 1654 157.500 1647 161z" fill="#b8c2d8"/>
<rect x="1664" y="146" width="24" height="23" rx="5" fill="#5672a4"/><path d="M1670 150h12l-6 15z M1673 153l3 7.500 3-7.500z" fill="#e08a4a" fill-rule="evenodd"/>
<text x="1693.500" y="162.500" style="fill:#f0a030;font-size:12.700px" clip-path="url(#otx)">Guide Body Practice</text>
<use href="#ar2" x="1846" y="158"/><use href="#eye" x="1872.600" y="157"/><use href="#cam" x="1897" y="157.500"/>

<!-- properties -->
<rect x="1588" y="367" width="332" height="638" rx="5" fill="#434343"/>
<rect x="1585" y="398" width="38" height="607" fill="#232323"/>
<rect x="1598" y="371" width="40" height="24" rx="4" class="w" stroke="#383838"/>
<rect x="1604" y="374" width="18" height="7" rx="3" fill="#e0e0e0"/><rect x="1604" y="384" width="18" height="7" rx="3" fill="#e0e0e0"/><circle cx="1617" cy="377.500" r="2.500" fill="#333"/><circle cx="1609" cy="387.500" r="2.500" fill="#333"/><use href="#ch" x="1630" y="383"/>
<rect x="1676" y="371" width="143" height="24" rx="4" class="k"/><circle cx="1693" cy="381" r="5.500" fill="none" stroke="#e0e0e0" stroke-width="1.300"/><path d="M1689 385l-6 6" stroke="#e0e0e0" stroke-width="1.300"/>
<rect x="1884" y="371" width="25" height="24" rx="4" class="w"/><use href="#ch" x="1896.500" y="383"/>
<g fill="#2c2c2c">
<path d="M1594 409h29v33h-29a4 4 0 0 1-4-4v-25a4 4 0 0 1 4-4z"/>
<path d="M1594 453h29v33h-29a4 4 0 0 1-4-4v-25a4 4 0 0 1 4-4z"/><path d="M1594 488h29v33h-29a4 4 0 0 1-4-4v-25a4 4 0 0 1 4-4z"/><path d="M1594 523h29v33h-29a4 4 0 0 1-4-4v-25a4 4 0 0 1 4-4z"/><path d="M1594 558h29v33h-29a4 4 0 0 1-4-4v-25a4 4 0 0 1 4-4z"/><path d="M1594 593h29v33h-29a4 4 0 0 1-4-4v-25a4 4 0 0 1 4-4z"/>
<path d="M1594 637h29v33h-29a4 4 0 0 1-4-4v-25a4 4 0 0 1 4-4z"/>
<path d="M1594 681h29v33h-29a4 4 0 0 1-4-4v-25a4 4 0 0 1 4-4z"/><path d="M1594 751h29v33h-29a4 4 0 0 1-4-4v-25a4 4 0 0 1 4-4z"/><path d="M1594 786h29v33h-29a4 4 0 0 1-4-4v-25a4 4 0 0 1 4-4z"/><path d="M1594 821h29v33h-29a4 4 0 0 1-4-4v-25a4 4 0 0 1 4-4z"/><path d="M1594 856h29v33h-29a4 4 0 0 1-4-4v-25a4 4 0 0 1 4-4z"/><path d="M1594 891h29v33h-29a4 4 0 0 1-4-4v-25a4 4 0 0 1 4-4z"/>
</g>
<path d="M1594 716h29v33h-29a4 4 0 0 1-4-4v-25a4 4 0 0 1 4-4z" fill="#434343"/>
<!-- tab icons -->
<g transform="translate(1606,425)"><path d="M-5-8V-4M-5-2" stroke="#ddd"/><rect x="-8" y="-1" width="6" height="9" rx="2" fill="#ddd"/><path d="M3-8c-2 3 0 5 2 5s4-2 3-5l-1 3H4zM5-3V7" fill="none" stroke="#e0e0e0" stroke-width="2.500"/></g>
<g transform="translate(1606,469)"><rect x="-8" y="-6" width="17" height="13" fill="#ddd"/><rect x="-6" y="-3" width="10" height="3" fill="#333"/><rect x="-6" y="2" width="10" height="2" fill="#333"/><path d="M-5-8h4M5-8l3 2" stroke="#ddd" stroke-width="1.500"/></g>
<g transform="translate(1606,504)"><path d="M-8-8H8V-3H9V5H5V-1H-5V5H-9V-3H-8z" fill="#e0e0e0"/><rect x="-5" y="-1" width="10" height="9" fill="#c8c8c8"/><path d="M-4 6-1 2 3 6z" fill="#333"/></g>
<use href="#imgs" x="1606" y="539"/>
<g transform="translate(1606,574)"><path d="M-4-7-8 2c0 4 5 5 7 2L-1-7z" fill="#dcdcdc"/><circle cx="5" cy="-6" r="2.500" fill="#dcdcdc"/><circle cx="3" cy="3" r="4.500" fill="#2c2c2c" stroke="#dcdcdc" stroke-width="1.200"/></g>
<g transform="translate(1606,609)"><circle r="7.500" fill="#c65c6c"/><path d="M-6-2c2-1 4-2 5 0s-1 3 1 4 2 4 0 5c-2-1-3-3-4-4-2-1-2-3-2-5zM2-6c2 1 4 3 4 5l-3 1z" fill="#2c2c2c"/><path d="M-9 8 9-8" stroke="#c65c6c" stroke-width="1.200"/></g>
<g transform="translate(1606,653)"><rect x="-8" y="-8" width="16" height="4" fill="none" stroke="#e6e6e6" stroke-width="1.300"/><path d="M-7-4V8H7V-4M-2-.5H2" fill="none" stroke="#e6e6e6" stroke-width="1.300"/></g>
<g transform="translate(1606,697.500)"><rect x="-5.500" y="-5.500" width="11" height="11" fill="#d69458"/><path d="M-8.500-4V-8.500H-4M4-8.500H8.500V-4M8.500 4V8.500H4M-4 8.500H-8.500V4" fill="none" stroke="#a36b3e" stroke-width="1.200"/></g>
<path d="M1596 741c0-2 6-6 8-6-1-4 2-8 7-8l-2 4 3 2 3-4c1 4-2 9-6 9-2 2-6 7-8 7-3 0-5-3-5-4z" fill="#71a8ff" transform="translate(0,-4)"/>
<g transform="translate(1606,767.500)" fill="#5a86c8" stroke="#5a86c8"><circle cx="-6" cy="-6" r="2.500"/><circle cx="6" cy="6" r="2"/><circle cx="-6" cy="6" r="1.500"/><circle cx="7" cy="-6" r="1.300"/><path d="M-6-6 6 6M-6-6V6M-6-6H7" fill="none" stroke-width="1.100"/></g>
<g transform="translate(1606,802.500)"><path d="M5-5A7.500 7.500 0 1 0 7 4" fill="none" stroke="#5a86c8" stroke-width="1.400"/><circle r="3" fill="#5a86c8"/><circle cx="6" cy="-6" r="2" fill="#5a86c8"/></g>
<g transform="translate(1606,837.500)"><path d="M-8 0C-8-5-2-5 6-8c3-1 3 5 1 8-2 4-6 8-9 7-3 0-6-3-6-7z" fill="none" stroke="#5a86c8" stroke-width="1.600"/><circle cx="-2" cy="2" r="3.500" fill="none" stroke="#5a86c8" stroke-width="1.600"/></g>
<g transform="translate(1606,872.500)"><path d="M-6-6H6L1.500 6h-3z" fill="none" stroke="#10b28a" stroke-width="1.500"/><g fill="#2c2c2c" stroke="#10b28a" stroke-width="1.200"><rect x="-8.500" y="-8.500" width="4" height="4"/><rect x="4.500" y="-8.500" width="4" height="4"/><rect x="-2" y="4.500" width="4" height="4"/></g></g>
<g transform="translate(1606,907.500)"><circle r="8.500" fill="#c95f6d"/><path d="M0 0H8.500A8.500 8.500 0 0 1 0 8.500z" fill="#2c2c2c"/><path d="M0 0V-8.500M0 0H-8.500" stroke="#2c2c2c" stroke-width=".8"/></g>
<!-- prop content -->
<g transform="translate(1646,420)"><rect x="-5" y="-5" width="10" height="10" fill="#e0e0e0"/><path d="M-8.500-4V-8.500H-4M4-8.500H8.500V-4M8.500 4V8.500H4M-4 8.500H-8.500V4" fill="none" stroke="#bbb"/></g>
<text x="1666" y="424.500">Guide Body Practice</text>
<path d="M1894 423 1890 429M1893 415l7-3 4 4-4 6c-1 2-2 2-3 1l-4-4c-1-1-1-3 0-4z" fill="none" stroke="#777" stroke-width="1.200"/>
<rect x="1634" y="454" width="275" height="23" rx="4" class="w"/><text x="1643" y="470">Add Modifier</text><use href="#ch" x="1901" y="466"/>
<rect x="1629" y="493" width="285" height="29" rx="4" fill="#383838"/><rect x="1629" y="528" width="285" height="29" rx="4" fill="#383838"/>
<use href="#tr" x="1642" y="507.500"/><use href="#tr" x="1642" y="542.500"/>
<path d="M1665 499v3M1665 504v3M1665 509v3M1665 514v3M1662 502c-3-3-6-2-5 1l2 3-2 3c-1 4 3 5 5 2M1668 502c3-3 6-2 5 1l-2 3 2 3c1 4-3 5-5 2" fill="none" stroke="#bbb" stroke-width="1.200"/>
<rect x="1657.500" y="535" width="16" height="16" fill="none" stroke="#b0b0b0"/><circle cx="1665.500" cy="543" r="5.500" fill="none" stroke="#d8d8d8" stroke-width="1.200"/>
<!-- modifier 1 -->
<g id="mod"><rect x="1689" y="496" width="164" height="25" rx="4" class="w"/><path d="M1693 496h41v25h-41a4 4 0 0 1-4-4v-17a4 4 0 0 1 4-4z" class="k"/><rect x="1734" y="496" width="23.500" height="25" class="l"/><rect x="1759" y="496" width="23" height="25" class="u"/><rect x="1783" y="496" width="22.500" height="25" class="u"/><rect x="1806" y="496" width="23" height="25" class="u"/>
<use href="#mt" x="1746" y="508.500"/><use href="#mode" x="1770.500" y="508.500"/><use href="#mon" x="1794" y="508"/><use href="#cam2" x="1817.500" y="508.500"/><use href="#ch" x="1841" y="509"/><use href="#xx" x="1866" y="508.500"/><use href="#dots" x="1899" y="507.500"/></g>
<text class="m b" x="1712" y="512.500">Mir...</text>
<use href="#mod" y="35"/>
<text class="m b" x="1711" y="547.500">Su...</text>

<!-- timeline -->
<rect x="1" y="934" width="1582" height="71" rx="5" fill="#434343"/>
<rect x="1" y="965" width="1582" height="40" fill="#2c2c2c"/>
<rect x="11" y="938" width="38.500" height="24" rx="5" class="w" stroke="#383838"/><circle cx="24" cy="950" r="8" fill="#e6e6e6"/><path d="M29 945l-5 5 5 5" fill="none" stroke="#2a2a2a" stroke-width="1.500"/><use href="#ch" x="42" y="951"/>
<rect x="57" y="938" width="161" height="24" rx="5" class="w" stroke="#383838"/><path d="M143.500 938v24" stroke="#3d3d3d"/>
<text x="66" y="954">Playback</text><use href="#ch" x="135.500" y="951"/><text x="153" y="954">Keying</text><use href="#ch" x="210" y="951"/>
<text x="230" y="954">View</text><text x="280.500" y="954">Marker</text>
<rect x="678.500" y="938" width="47.500" height="24" rx="4" fill="#383838"/><path d="M682.500 938h19.500v24h-19.500a4 4 0 0 1-4-4v-16a4 4 0 0 1 4-4z" class="l"/><circle cx="690" cy="950" r="5" fill="#d0d0d0"/><use href="#chd" x="714" y="951"/>
<rect x="734" y="938" width="147.600" height="24" rx="4" class="l"/><path d="M758.500 938v24M783 938v24M808 938v24M833 938v24M857 938v24" stroke="#404040"/>
<path d="M739 944h2v12h-2zM752 944v12l-9-6zM761 950l5-6v12zM767 950l5-6 5 6-5 6zM778 950l5-6v12zM800.500 943v14l-11-7z" fill="#f0f0f0"/>
<path d="M814 942v16l12-8z" fill="#f0f0f0"/><path d="M836.500 944l5 6-5 6zM842 950l5-6 5 6-5 6zM862 944l8 6-8 6zM872 944h2v12h-2z" fill="#f0f0f0"/>
<rect x="1235" y="938" width="91" height="24" rx="4" class="l"/><text class="m" x="1279" y="954.500">0</text>
<rect x="1334" y="938" width="24" height="24" rx="4" fill="#484848"/><circle cx="1346" cy="951" r="7" fill="none" stroke="#dcdcdc" stroke-width="1.200"/><path d="M1346 946v5l3 2M1343 942.500h6M1353 944l2 2" stroke="#dcdcdc" fill="none"/>
<rect x="1358" y="938" width="217.500" height="24" rx="4" class="l"/><rect x="1358" y="938" width="6" height="24" class="l"/><path d="M1469.500 938v24" stroke="#404040"/>
<text x="1377" y="954">Start</text><text x="1451" y="954" style="text-anchor:end">1</text>
<text x="1489" y="954">End</text><text x="1558" y="954" style="text-anchor:end">250</text>
<!-- ruler -->
<text class="m g" x="78.800" y="984.500">-70</text><text class="m g" x="153.200" y="984.500">-60</text><text class="m g" x="227.700" y="984.500">-50</text><text class="m g" x="302.200" y="984.500">-40</text><text class="m g" x="376.600" y="984.500">-30</text><text class="m g" x="451.100" y="984.500">-20</text><text class="m g" x="525.500" y="984.500">-10</text><text class="m g" x="674.500" y="984.500">10</text><text class="m g" x="748.900" y="984.500">20</text><text class="m g" x="823.400" y="984.500">30</text><text class="m g" x="897.800" y="984.500">40</text><text class="m g" x="972.300" y="984.500">50</text><text class="m g" x="1046.800" y="984.500">60</text><text class="m g" x="1121.200" y="984.500">70</text><text class="m g" x="1195.700" y="984.500">80</text><text class="m g" x="1270.100" y="984.500">90</text><text class="m g" x="1344.600" y="984.500">100</text><text class="m g" x="1419.100" y="984.500">110</text><text class="m g" x="1493.500" y="984.500">120</text><text class="m g" x="1568" y="984.500">130</text>
<rect x="3" y="989" width="1578" height="13" rx="5" fill="#3d3d3d"/>
<path d="M10 996H1572" stroke="#2a2a2a" stroke-width="13" stroke-dasharray="1 36.230"/>
<rect x="11" y="989" width="820" height="13" rx="6.500" fill="#6a6a6a"/><circle cx="16" cy="995.500" r="3.500" fill="#3f3f3f"/><circle cx="824.500" cy="995.500" r="3.500" fill="#3f3f3f"/>
<rect x="585.700" y="969" width="29.300" height="21" rx="4" class="u"/><text class="m b" x="600" y="984.500">0</text>
<rect x="599.500" y="1001" width="1.500" height="4" fill="#5680c2"/>
<path d="M1 985h5l4 5v12l-4 3H1z" fill="#333"/><path d="M3 990l3 3.500-3 3.500" stroke="#aaa" fill="none"/>
<path d="M1583 985h-5l-4 5v12l4 3h5z" fill="#333"/><path d="M1581 990l-3 3.500 3 3.500" stroke="#aaa" fill="none"/>
<!-- status -->
<rect y="1005" width="1920" height="25" fill="#303030"/>
<g fill="none" stroke="#bdbdbd" stroke-width="1.200"><rect x="15.500" y="1010" width="13" height="18" rx="6"/><rect x="96" y="1010" width="13" height="18" rx="6"/><path d="M112 1009v6M115 1010v3"/><rect x="326.500" y="1010" width="13" height="18" rx="6"/><rect x="638.500" y="1010" width="13" height="18" rx="6"/></g>
<path d="M22 1010.500h-.5a6 6 0 0 0-6 6v2h6.500zM102.500 1010.500h-.5a6 6 0 0 0-6 6v2h6.500zM645 1010.500h.5a6 6 0 0 1 6 6v2H645z" fill="#bdbdbd"/>
<rect x="331.500" y="1013" width="3" height="7" rx="1.500" fill="#bdbdbd"/>
<text x="43" y="1021.500" class="g">Select</text><text x="125.500" y="1021.500" class="g">Box Select</text><text x="354.600" y="1021.500" class="g">Rotate View</text><text x="665" y="1021.500" class="g">Call Menu</text>
<text x="1250" y="1021.500" class="g" textLength="659" lengthAdjust="spacingAndGlyphs">Guide Body Practice | Verts:0/90 | Edges:0/152 | Faces:0/62 | Tris:123 | Objects:1/1 | Memory: 111.2 MiB</text>
</svg>
</body></html>
